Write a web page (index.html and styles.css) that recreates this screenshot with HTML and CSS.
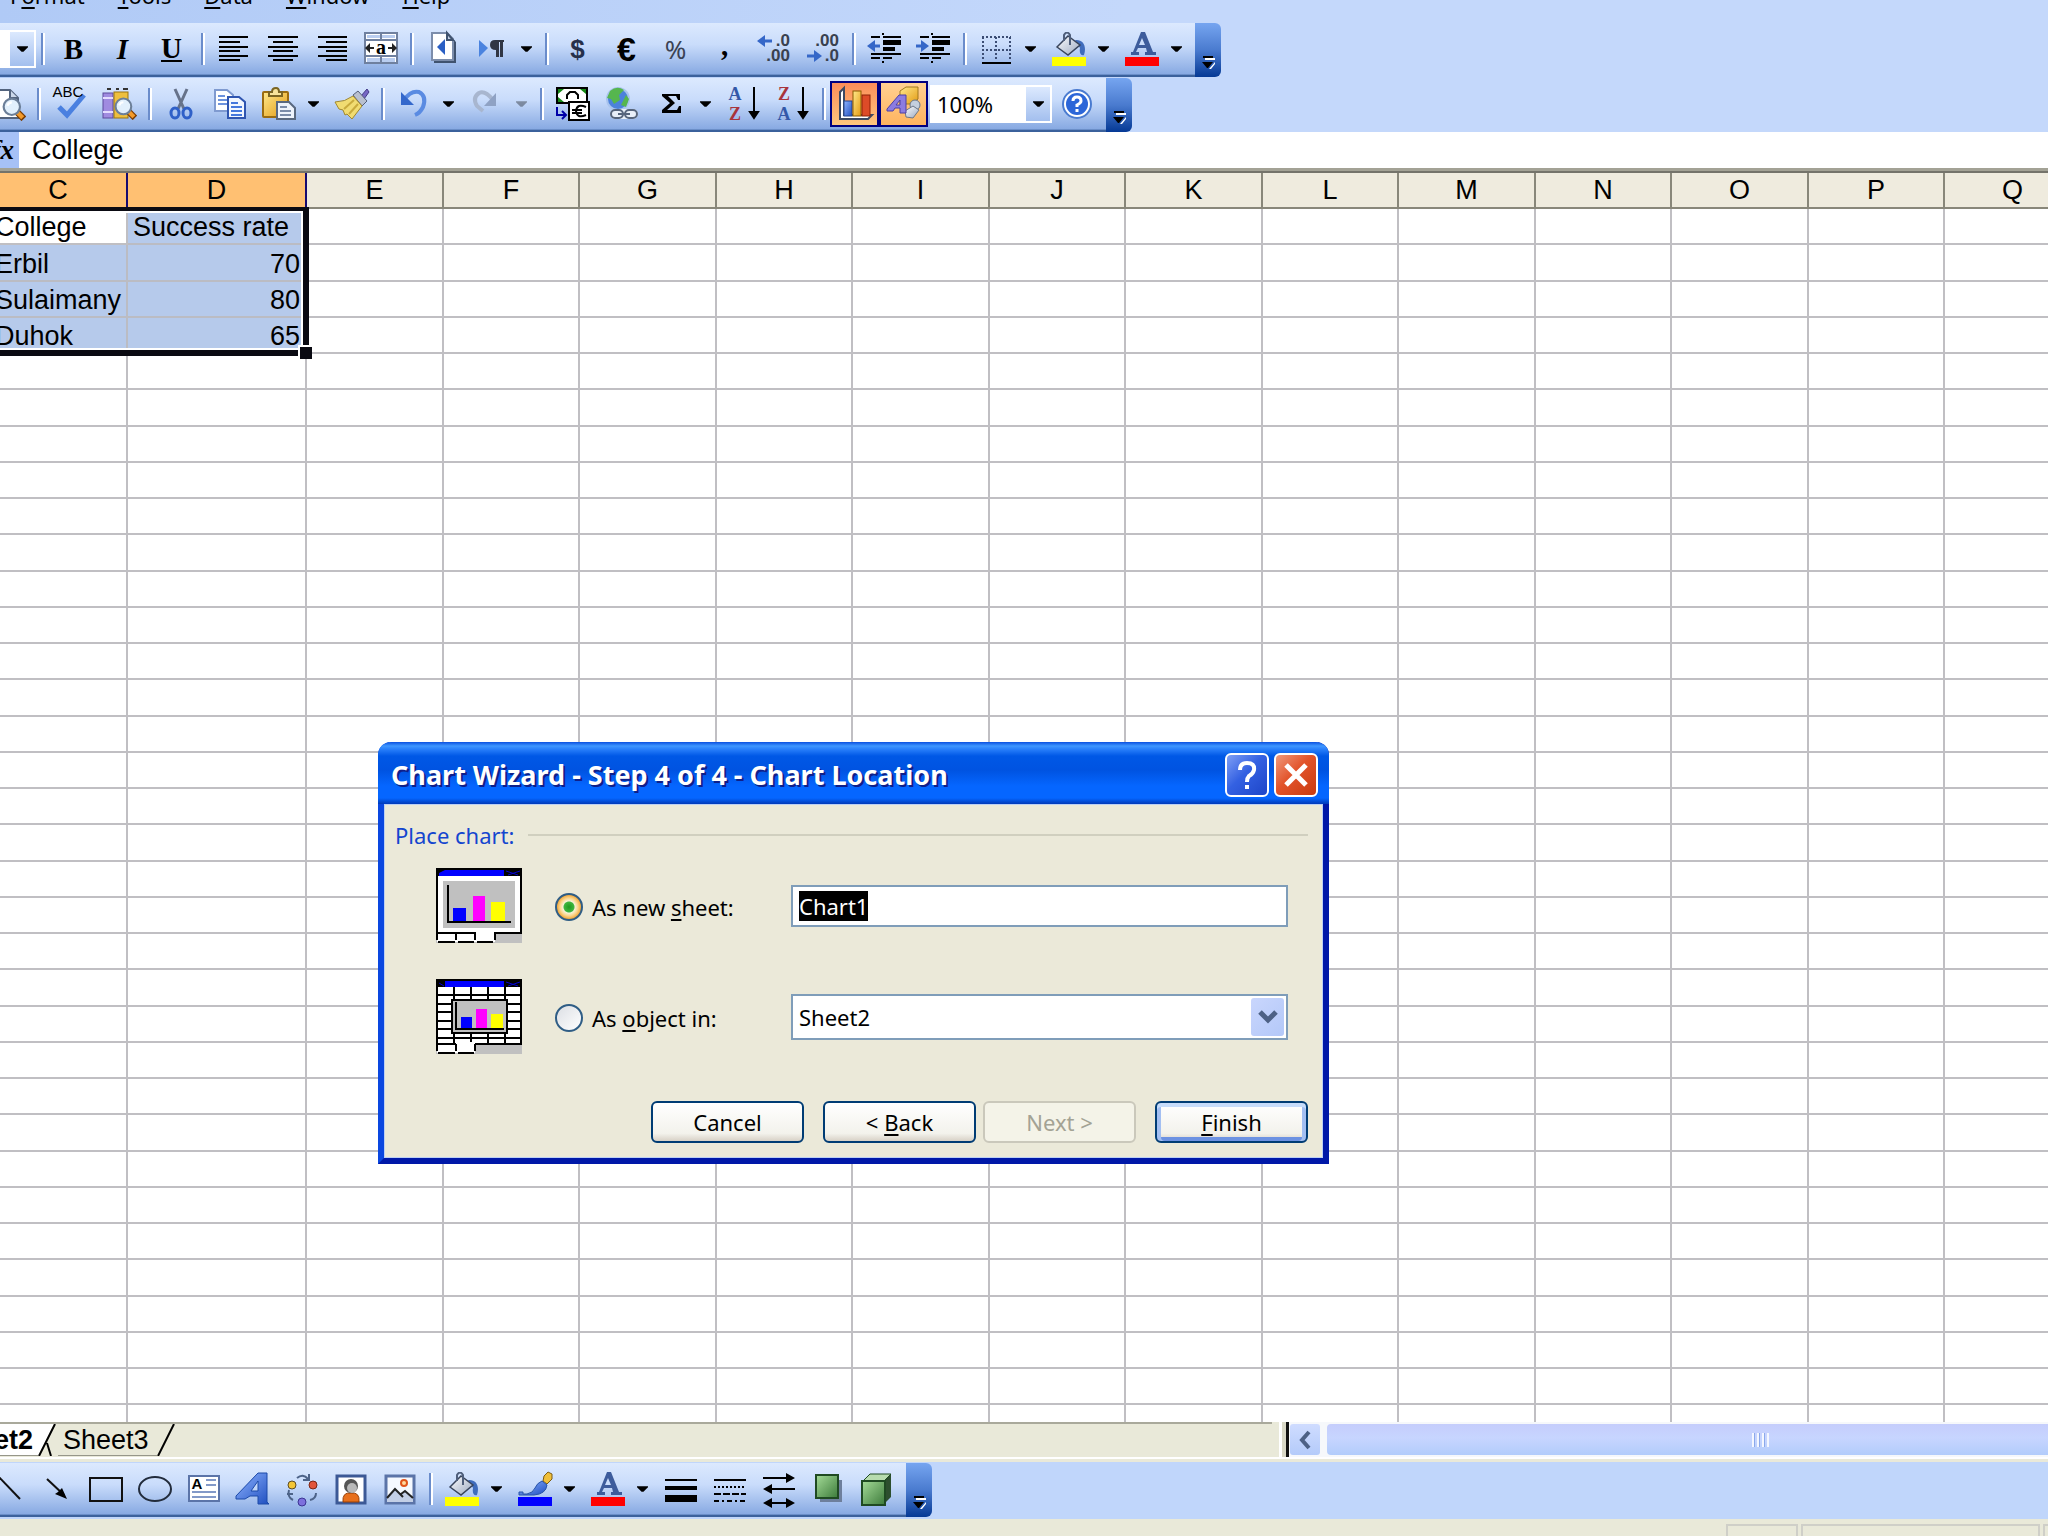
FILE: index.html
```html
<!DOCTYPE html>
<html lang="en">
<head>
    <meta charset="UTF-8">
    <meta name="viewport" content="width=device-width, initial-scale=1.0">
    <title>Sheet2</title>
    <link rel="stylesheet" href="styles.css">
</head>
<body>
    <!-- Shared icon shapes -->
    <svg class="defs" aria-hidden="true">
        <defs>
            <linearGradient id="gBlue" x1="0" y1="0" x2="1" y2="1">
                <stop offset="0" stop-color="#8fb4ff"/><stop offset="1" stop-color="#1f4fc0"/>
            </linearGradient>
            <linearGradient id="gGold" x1="0" y1="0" x2="1" y2="1">
                <stop offset="0" stop-color="#ffe98c"/><stop offset="1" stop-color="#e39a12"/>
            </linearGradient>
            <linearGradient id="gGreen" x1="0" y1="0" x2="1" y2="1">
                <stop offset="0" stop-color="#a5dc98"/><stop offset="1" stop-color="#3c7a3a"/>
            </linearGradient>
            <linearGradient id="gSilver" x1="0" y1="0" x2="1" y2="1">
                <stop offset="0" stop-color="#ffffff"/><stop offset="1" stop-color="#9aa8c0"/>
            </linearGradient>
        </defs>
        <symbol id="drop" viewBox="0 0 12 7"><path d="M0 0H12V1L7 6H5L0 1Z"/></symbol>
        <symbol id="more" viewBox="0 0 16 16">
            <path d="M5 3H15V5H5ZM11 14L15 9V7L9 14Z" fill="#fff"/>
            <path d="M3 1H13V3H3ZM2 7H13L8 13H7Z"/>
        </symbol>
        <symbol id="bucket" viewBox="0 0 34 24">
            <path d="M23 8C31 7 35 14 32 23C29 24 27 21 28 16Z" fill="#3f6cbc"/>
            <path d="M5 15L16 4L28 13L16 23Z" fill="url(#gSilver)" stroke="#39455c" stroke-width="1.5"/>
            <path d="M12 9V3Q15 -2 18 3V13" fill="none" stroke="#4f5f7b" stroke-width="2"/>
        </symbol>
        <symbol id="fontA" viewBox="0 0 34 24">
            <path d="M16 0H20L28 20H31V23H20V20H22L21 16H13L11 20H14V23H6V20H8ZM17 6L14 13H20Z" fill="#3d5c9c" fill-rule="evenodd"/>
        </symbol>
        <symbol id="lens" viewBox="0 0 22 22">
            <path d="M13 13L20 20" stroke="#7a3b00" stroke-width="6"/>
            <path d="M13 13L19 19" stroke="#f39a2a" stroke-width="4"/>
            <circle cx="9" cy="9" r="7.500" fill="#e2f0fc" stroke="#6c7f98" stroke-width="2"/>
            <path d="M5 8Q6 5 9 5" fill="none" stroke="#fff" stroke-width="2"/>
        </symbol>
    </svg>

    <nav class="menu">
        <a href="#">F<u>o</u>rmat</a>
        <a href="#"><u>T</u>ools</a>
        <a href="#"><u>D</u>ata</a>
        <a href="#"><u>W</u>indow</a>
        <a href="#"><u>H</u>elp</a>
    </nav>

    <div class="toolbars">
        <!-- Formatting -->
        <div class="toolbar">
            <div class="tools">
                <div class="combo combo-size">
                    <select aria-label="Font size"><option></option></select>
                    <span class="combo-arrow"><svg class="drop-icon"><use href="#drop"/></svg></span>
                </div>
                <span class="sep"></span>
                <button class="tool serif"><b>B</b></button>
                <button class="tool serif"><b><i>I</i></b></button>
                <button class="tool serif"><b class="lined">U</b></button>
                <span class="sep"></span>
                <button class="tool" aria-label="Align left"><svg class="icon" viewBox="0 0 34 34"><path d="M2 5H31M2 10H23M2 15H31M2 19H23M2 24H31M2 28H23" stroke="#000" stroke-width="2"/></svg></button>
                <button class="tool" aria-label="Center"><svg class="icon" viewBox="0 0 34 34"><path d="M2 5H32M7 10H27M2 15H32M7 19H27M2 24H32M7 28H27" stroke="#000" stroke-width="2"/></svg></button>
                <button class="tool" aria-label="Align right"><svg class="icon" viewBox="0 0 34 34"><path d="M3 5H32M11 10H32M3 15H32M11 19H32M3 24H32M11 28H32" stroke="#000" stroke-width="2"/></svg></button>
                <button class="tool" aria-label="Merge and center"><svg class="icon" viewBox="0 0 34 34">
                    <rect x="1" y="1" width="32" height="30" fill="#fff" stroke="#6f809f" stroke-width="2"/>
                    <path d="M3 3H16V6H3ZM18 3H31V6H18ZM3 26H16V30H3ZM18 26H31V30H18Z" fill="#b9cdf0"/>
                    <path d="M1 8H33M1 24H33M17 1V8M17 24V31" stroke="#6f809f" stroke-width="2"/>
                    <path d="M2 16H10M32 16H24" stroke="#222" stroke-width="2"/>
                    <path d="M6 11V21L1 16ZM28 11V21L33 16Z" fill="#222"/>
                    <text x="17" y="22" class="icon-a">a</text>
                </svg></button>
                <span class="sep"></span>
                <button class="tool" aria-label="Sheet right-to-left"><svg class="icon" viewBox="0 0 34 34">
                    <path d="M8 4H24L30 10V31H8Z" fill="#40536f"/>
                    <path d="M6 1H21L27 7V28H6Z" fill="#fff" stroke="#7c8dab" stroke-width="2"/>
                    <path d="M21 1V8H27Z" fill="#c3d0e6" stroke="#40536f" stroke-width="2"/>
                    <path d="M19 7V23L11 15Z" fill="#2a5fc4"/>
                </svg></button>
                <button class="tool" aria-label="Left-to-right"><svg class="icon" viewBox="0 0 34 34">
                    <path d="M4 8L13 16L4 25Z" fill="#4a83df"/>
                    <path d="M20 8H29V10H28V25H25V10H24V25H21V18Q15 18 15 13Q15 8 20 8Z" fill="#303644"/>
                </svg></button>
                <button class="drop" aria-label="Direction options"><svg class="drop-icon"><use href="#drop"/></svg></button>
                <span class="sep"></span>
                <button class="tool money">$</button>
                <button class="tool euro">€</button>
                <button class="tool percent">%</button>
                <button class="tool serif comma"><b>,</b></button>
                <button class="tool" aria-label="Increase decimal"><svg class="icon" viewBox="0 0 34 34">
                    <path d="M4 9H15" stroke="#3567c8" stroke-width="3"/><path d="M0 9L8 3V15Z" fill="#3567c8"/>
                    <text x="33" y="14" class="icon-num">.0</text><text x="33" y="29" class="icon-num">.00</text>
                </svg></button>
                <button class="tool" aria-label="Decrease decimal"><svg class="icon" viewBox="0 0 34 34">
                    <path d="M1 24H12" stroke="#3567c8" stroke-width="3"/><path d="M16 24L8 18V30Z" fill="#3567c8"/>
                    <text x="33" y="14" class="icon-num">.00</text><text x="33" y="29" class="icon-num">.0</text>
                </svg></button>
                <span class="sep"></span>
                <button class="tool" aria-label="Decrease indent"><svg class="icon" viewBox="0 0 34 34">
                    <path d="M3 5H12M15 5H33M3 22H33M3 26H12M15 26H24M15 1V3M15 29V31" stroke="#000" stroke-width="2"/>
                    <path d="M15 8H33V13H15ZM15 15H27V19H15Z"/>
                    <path d="M4 14H12" stroke="#3567c8" stroke-width="3"/><path d="M-1 14L7 8V20Z" fill="#3567c8"/>
                </svg></button>
                <button class="tool" aria-label="Increase indent"><svg class="icon" viewBox="0 0 34 34">
                    <path d="M3 5H12M15 5H33M3 22H33M3 26H12M15 26H24M15 1V3M15 29V31" stroke="#000" stroke-width="2"/>
                    <path d="M15 8H33V13H15ZM15 15H27V19H15Z"/>
                    <path d="M-1 14H7" stroke="#3567c8" stroke-width="3"/><path d="M12 14L4 8V20Z" fill="#3567c8"/>
                </svg></button>
                <span class="sep"></span>
                <button class="tool" aria-label="Borders"><svg class="icon" viewBox="0 0 34 34">
                    <path d="M3 5H32M3 18H32M4 5V28M17 5V28M31 5V28" stroke="#3b4d74" stroke-width="2" stroke-dasharray="2 2"/>
                    <path d="M3 31H32" stroke="#000" stroke-width="2"/>
                </svg></button>
                <button class="drop" aria-label="Border styles"><svg class="drop-icon"><use href="#drop"/></svg></button>
                <button class="tool" aria-label="Fill color"><svg class="icon" viewBox="0 0 34 34"><use href="#bucket" width="34" height="24"/><path d="M0 25H34V34H0Z" fill="#ff0"/></svg></button>
                <button class="drop" aria-label="Fill colors"><svg class="drop-icon"><use href="#drop"/></svg></button>
                <button class="tool" aria-label="Font color"><svg class="icon" viewBox="0 0 34 34"><use href="#fontA" width="34" height="24"/><path d="M0 25H34V34H0Z" fill="#f00"/></svg></button>
                <button class="drop" aria-label="Font colors"><svg class="drop-icon"><use href="#drop"/></svg></button>
            </div>
            <button class="cap" aria-label="Toolbar options"><svg class="more-icon"><use href="#more"/></svg></button>
        </div>

        <!-- Standard -->
        <div class="toolbar">
            <div class="tools cut">
                <button class="tool" aria-label="Print preview"><svg class="icon" viewBox="0 0 34 34">
                    <path d="M0 3H19L27 11V31H0Z" fill="#fff" stroke="#53637d" stroke-width="2"/>
                    <path d="M19 3V11H27" fill="#ccd8ea" stroke="#53637d" stroke-width="2"/>
                    <use href="#lens" x="11" y="10" width="24" height="24"/>
                </svg></button>
                <span class="sep"></span>
                <button class="tool" aria-label="Spelling"><svg class="icon" viewBox="0 0 34 34">
                    <path d="M6 20L14 28L31 8" fill="none" stroke="#4a80e0" stroke-width="5"/>
                    <text x="15" y="10" class="icon-abc">ABC</text>
                </svg></button>
                <button class="tool" aria-label="Research"><svg class="icon" viewBox="0 0 34 34">
                    <rect x="1" y="6" width="10" height="25" fill="#a08be0" stroke="#5c4a9c"/>
                    <rect x="12" y="5" width="14" height="26" fill="#eebf3e" stroke="#9a7410"/>
                    <path d="M1 11H11M1 25H11" stroke="#e4dcff" stroke-width="2"/>
                    <path d="M5 2H9M14 2H17M21 2H26" stroke="#333" stroke-width="2"/>
                    <use href="#lens" x="12" y="10" width="23" height="23"/>
                </svg></button>
                <span class="sep"></span>
                <button class="tool" aria-label="Cut"><svg class="icon" viewBox="0 0 34 34">
                    <path d="M11 2L20 22M23 2L14 22" stroke="#66728a" stroke-width="3"/>
                    <ellipse cx="11" cy="26" rx="4" ry="5" fill="none" stroke="#2f60c8" stroke-width="3"/>
                    <ellipse cx="23" cy="26" rx="4" ry="5" fill="none" stroke="#2f60c8" stroke-width="3"/>
                </svg></button>
                <button class="tool" aria-label="Copy"><svg class="icon" viewBox="0 0 34 34">
                    <path d="M2 3H14L20 8V24H2Z" fill="#fff" stroke="#7f9ad0" stroke-width="2"/>
                    <path d="M5 9H12M5 13H14M5 17H14" stroke="#6d93dd" stroke-width="2"/>
                    <path d="M15 10H26L32 15V31H15Z" fill="#f2f7ff" stroke="#2f55b0" stroke-width="2"/>
                    <path d="M18 16H25M18 20H29M18 24H29M18 28H29" stroke="#4477dd" stroke-width="2"/>
                </svg></button>
                <button class="tool" aria-label="Paste"><svg class="icon" viewBox="0 0 34 34">
                    <rect x="1" y="5" width="25" height="25" rx="1" fill="url(#gGold)" stroke="#9b6c10" stroke-width="2"/>
                    <path d="M7 9V5H10Q10 1 14 1Q17 1 17 5H20V9Z" fill="#f8e39a" stroke="#7b6523" stroke-width="2"/>
                    <path d="M15 15H27L33 21V32H15Z" fill="#eef3fb" stroke="#59687f" stroke-width="2"/>
                    <path d="M18 20H25M18 24H29M18 28H29" stroke="#7a8ba8" stroke-width="2"/>
                </svg></button>
                <button class="drop" aria-label="Paste options"><svg class="drop-icon"><use href="#drop"/></svg></button>
                <button class="tool" aria-label="Format painter"><svg class="icon" viewBox="0 0 34 34">
                    <path d="M26 9L32 2L34 5L29 12Z" fill="#7668c4" stroke="#443a86"/>
                    <path d="M18 8L23 4L32 14L27 19Z" fill="#b9c0cf" stroke="#56607a"/>
                    <path d="M18 9L27 19L17 32L12 27L10 28L8 23L4 22L0 15Q10 15 18 9Z" fill="#f1dc72" stroke="#a2882c"/>
                    <path d="M19 13L9 22M23 17L14 27" stroke="#c9ab3d" stroke-width="2"/>
                </svg></button>
                <span class="sep"></span>
                <button class="tool" aria-label="Undo"><svg class="icon" viewBox="0 0 34 34">
                    <path d="M7 13Q14 3 22 5Q30 9 26 20Q23 26 18 28" fill="none" stroke="#5a8be2" stroke-width="4"/>
                    <path d="M4 5V18H17Z" fill="#3468cc"/>
                </svg></button>
                <button class="drop" aria-label="Undo list"><svg class="drop-icon"><use href="#drop"/></svg></button>
                <button class="tool" aria-label="Redo" disabled><svg class="icon" viewBox="0 0 34 34">
                    <path d="M23 13Q15 3 9 6Q2 11 7 19L13 24" fill="none" stroke="#a8b6cf" stroke-width="4"/>
                    <path d="M26 6V19H14Z" fill="#8fa2c4"/>
                </svg></button>
                <button class="drop" aria-label="Redo list" disabled><svg class="drop-icon"><use href="#drop"/></svg></button>
                <span class="sep"></span>
                <button class="tool" aria-label="Euro conversion"><svg class="icon" viewBox="0 0 34 34">
                    <rect x="1" y="1" width="30" height="15" fill="#fff" stroke="#000" stroke-width="2"/>
                    <path d="M2 2H8L2 7ZM30 2H24L30 7ZM2 15V10L8 15Z" fill="#168a16"/>
                    <path d="M11 12V8L14 5H19L22 8V12" fill="none" stroke="#000" stroke-width="2"/>
                    <path d="M1 20V28H9M6 24L10 28L6 32" fill="none" stroke="#0000a8" stroke-width="2"/>
                    <rect x="13" y="15" width="20" height="18" fill="#fff" stroke="#000" stroke-width="2"/>
                    <path d="M30 20Q21 16 20 24Q21 32 30 28M16 23H26M16 26H26" fill="none" stroke="#000" stroke-width="2"/>
                </svg></button>
                <button class="tool" aria-label="Hyperlink"><svg class="icon" viewBox="0 0 34 34">
                    <circle cx="13" cy="12" r="11" fill="#4c82dc" stroke="#a9c4ee" stroke-width="2"/>
                    <path d="M5 4Q12 -2 19 3L14 8L15 13L9 17L6 12L2 11ZM21 8L24 12L21 20L16 18Z" fill="#56b64e"/>
                    <rect x="5" y="22" width="28" height="10" rx="5" fill="#e9eff8"/>
                    <rect x="6" y="23" width="12" height="8" rx="4" fill="none" stroke="#57657c" stroke-width="2"/>
                    <rect x="20" y="23" width="12" height="8" rx="4" fill="none" stroke="#57657c" stroke-width="2"/>
                    <path d="M13 27H25" stroke="#57657c" stroke-width="2"/>
                </svg></button>
                <button class="tool" aria-label="AutoSum"><svg class="icon" viewBox="0 0 34 34"><path d="M8 7H26V13H24L22 9H14L21 16L13 23H23L25 19H27V26H8V23L16 16L8 9Z"/></svg></button>
                <button class="drop" aria-label="AutoSum functions"><svg class="drop-icon"><use href="#drop"/></svg></button>
                <button class="tool" aria-label="Sort ascending"><svg class="icon" viewBox="0 0 34 34">
                    <text x="8" y="13" class="icon-sort blue">A</text><text x="8" y="33" class="icon-sort red">Z</text>
                    <path d="M27 0V30M23 25H31L27 31Z" stroke="#000" stroke-width="2"/>
                </svg></button>
                <button class="tool" aria-label="Sort descending"><svg class="icon" viewBox="0 0 34 34">
                    <text x="8" y="13" class="icon-sort red">Z</text><text x="8" y="33" class="icon-sort blue">A</text>
                    <path d="M27 0V30M23 25H31L27 31Z" stroke="#000" stroke-width="2"/>
                </svg></button>
                <span class="sep"></span>
                <button class="tool pressed" aria-label="Chart wizard"><svg class="icon" viewBox="0 0 34 34">
                    <path d="M2 32V5L6 1V28H34L30 32Z" fill="#fff" stroke="#3c4a63" stroke-width="2"/>
                    <rect x="6" y="14" width="8" height="15" fill="url(#gBlue)" stroke="#22458f"/>
                    <rect x="15" y="4" width="8" height="25" fill="url(#gGold)" stroke="#8a5b00"/>
                    <rect x="24" y="8" width="8" height="21" fill="#dd4b28" stroke="#8f2207"/>
                </svg></button>
                <button class="tool active" aria-label="Drawing"><svg class="icon" viewBox="0 0 34 34">
                    <path d="M13 4L19 0H31V12L25 17H13Z" fill="url(#gGold)" stroke="#a07920"/>
                    <circle cx="28" cy="18" r="5" fill="#c4cfdf" stroke="#6b7688"/>
                    <path d="M18 24L26 19L32 23L26 31L19 30Z" fill="url(#gSilver)" stroke="#6b7688"/>
                    <path d="M0 22L12 8H19V26H13V21H8L6 24H0ZM13 13L9 18H13Z" fill="#8c7ce0" stroke="#4d3fa4" fill-rule="evenodd"/>
                </svg></button>
                <div class="combo combo-zoom">
                    <select aria-label="Zoom"><option>100%</option></select>
                    <span class="combo-arrow"><svg class="drop-icon"><use href="#drop"/></svg></span>
                </div>
                <button class="tool" aria-label="Help"><svg class="icon" viewBox="0 0 34 34">
                    <circle cx="17" cy="17" r="14" fill="#fff" stroke="#4a7bd0" stroke-width="2"/>
                    <circle cx="17" cy="17" r="11" fill="#2c66d8"/>
                    <path d="M13 14Q13 10 17 10Q21 10 21 14Q21 16 17 18V20M17 22V25" fill="none" stroke="#fff" stroke-width="3"/>
                </svg></button>
            </div>
            <button class="cap" aria-label="Toolbar options"><svg class="more-icon"><use href="#more"/></svg></button>
        </div>
    </div>

    <div class="formula">
        <span class="fx"><i>fx</i></span>
        <input type="text" aria-label="Formula" value="College">
    </div>

    <main class="sheet">
        <table>
            <thead><tr id="letters"></tr></thead>
            <tbody id="cells"></tbody>
        </table>
        <div class="selection"></div>
    </main>

    <div class="tabstrip">
        <div class="tabs">
            <button class="tab current">Sheet2</button>
            <svg class="slash" viewBox="0 0 20 32"><path d="M0 32L16 0H0Z" fill="#fff"/><path d="M17 0L1 32M9 19L13 32" stroke="#000" stroke-width="2" fill="none"/></svg>
            <button class="tab">Sheet3</button>
            <svg class="slash" viewBox="0 0 20 32"><path d="M17 0L1 32" stroke="#000" stroke-width="2"/></svg>
        </div>
        <div class="scroll">
            <span class="splitter"></span>
            <button class="scroll-left" aria-label="Scroll left"><svg viewBox="0 0 12 20"><path d="M10 2L3 10L10 18" fill="none" stroke="#4d6185" stroke-width="4"/></svg></button>
            <div class="thumb"><span class="grip"></span></div>
        </div>
    </div>

    <!-- Drawing -->
    <div class="drawing">
        <div class="toolbar">
            <div class="tools cut">
                <button class="tool" aria-label="Line"><svg class="icon" viewBox="0 0 34 34"><path d="M6 3L29 27" stroke="#111" stroke-width="2"/></svg></button>
                <button class="tool" aria-label="Arrow"><svg class="icon" viewBox="0 0 34 34"><path d="M7 7L24 23" stroke="#111" stroke-width="2"/><path d="M27 27L15 22L18 20L22 16Z"/></svg></button>
                <button class="tool" aria-label="Rectangle"><svg class="icon" viewBox="0 0 34 34"><rect x="1" y="6" width="32" height="23" fill="none" stroke="#111" stroke-width="2"/></svg></button>
                <button class="tool" aria-label="Oval"><svg class="icon" viewBox="0 0 34 34"><ellipse cx="17" cy="17" rx="16" ry="12" fill="none" stroke="#222c3c" stroke-width="2"/></svg></button>
                <button class="tool" aria-label="Text box"><svg class="icon" viewBox="0 0 34 34">
                    <rect x="2" y="4" width="30" height="25" fill="#fff" stroke="#5b74a8" stroke-width="2"/>
                    <path d="M19 8H29M19 13H29M5 20H29M5 25H29" stroke="#8299c8" stroke-width="2"/>
                    <text x="10" y="17" class="icon-box">A</text>
                </svg></button>
                <button class="tool" aria-label="WordArt"><svg class="icon" viewBox="0 0 34 34"><path d="M0 24L22 1H31V30L33 32H22V24H14L9 27H0ZM22 9L15 19H22Z" fill="url(#gBlue)" stroke="#1d4aa8" fill-rule="evenodd"/></svg></button>
                <button class="tool" aria-label="Diagram"><svg class="icon" viewBox="0 0 34 34">
                    <path d="M12 6Q18 1 23 7M24 2V8H18M31 21Q31 27 25 28M4 18Q2 25 8 28M2 22H8" fill="none" stroke="#4d6388" stroke-width="2"/>
                    <circle cx="7" cy="13" r="4" fill="#f3c534" stroke="#5c4a22"/><circle cx="28" cy="13" r="4" fill="#e2553a" stroke="#7c2614"/><circle cx="17" cy="30" r="4" fill="#7d70dd" stroke="#3c3494"/>
                </svg></button>
                <button class="tool" aria-label="Clip art"><svg class="icon" viewBox="0 0 34 34">
                    <rect x="3" y="4" width="28" height="27" fill="#fff" stroke="#3c5996" stroke-width="3"/>
                    <path d="M9 30Q8 20 17 21Q26 20 25 30Z" fill="#e8701c" stroke="#9a3f05"/>
                    <circle cx="17" cy="14" r="7" fill="#555"/><circle cx="18" cy="16" r="5" fill="#b9b9b9"/>
                </svg></button>
                <button class="tool" aria-label="Picture"><svg class="icon" viewBox="0 0 34 34">
                    <rect x="3" y="4" width="28" height="27" fill="#f5f9ff" stroke="#5b74a8" stroke-width="3"/>
                    <path d="M4 26L12 17L18 23L22 19L30 26V30H4Z" fill="#c3cfe6"/>
                    <path d="M4 26L12 17L20 25M18 22L22 19L30 26" fill="none" stroke="#222" stroke-width="2"/>
                    <circle cx="21" cy="11" r="3" fill="#ffd9a0" stroke="#e0551c" stroke-width="2"/>
                </svg></button>
                <span class="sep"></span>
                <button class="tool" aria-label="Shape fill"><svg class="icon" viewBox="0 0 34 34"><use href="#bucket" width="34" height="24"/><path d="M0 25H34V34H0Z" fill="#ff0"/></svg></button>
                <button class="drop" aria-label="Shape fills"><svg class="drop-icon"><use href="#drop"/></svg></button>
                <button class="tool" aria-label="Line color"><svg class="icon" viewBox="0 0 34 34">
                    <path d="M26 4L30 0L34 2V7L29 12L25 9Z" fill="#f0bf3a" stroke="#7c5c12"/>
                    <path d="M1 20V23H16Q28 22 29 13L24 9Q19 11 17 16Q15 21 9 22H5V20Z" fill="url(#gBlue)" stroke="#2854a8"/>
                    <path d="M0 25H34V34H0Z" fill="#00f"/>
                </svg></button>
                <button class="drop" aria-label="Line colors"><svg class="drop-icon"><use href="#drop"/></svg></button>
                <button class="tool" aria-label="Text color"><svg class="icon" viewBox="0 0 34 34"><use href="#fontA" width="34" height="24"/><path d="M0 25H34V34H0Z" fill="#f00"/></svg></button>
                <button class="drop" aria-label="Text colors"><svg class="drop-icon"><use href="#drop"/></svg></button>
                <button class="tool" aria-label="Line style"><svg class="icon" viewBox="0 0 34 34"><path d="M1 7H33V9H1ZM1 14H33V18H1ZM1 23H33V30H1Z"/></svg></button>
                <button class="tool" aria-label="Dash style"><svg class="icon" viewBox="0 0 34 34">
                    <path d="M1 8H33" stroke="#000" stroke-width="2"/><path d="M1 15H33" stroke="#000" stroke-width="2" stroke-dasharray="2 2"/>
                    <path d="M1 22H33" stroke="#000" stroke-width="2" stroke-dasharray="7 2"/><path d="M1 29H33" stroke="#000" stroke-width="2" stroke-dasharray="5 3 2 3"/>
                </svg></button>
                <button class="tool" aria-label="Arrow style"><svg class="icon" viewBox="0 0 34 34">
                    <path d="M1 6H28M6 17H33M6 31H28" stroke="#000" stroke-width="2"/>
                    <path d="M24 1V11L33 6ZM10 12V22L1 17ZM24 26V36L33 31ZM10 26V36L1 31Z"/>
                </svg></button>
                <button class="tool" aria-label="Shadow style"><svg class="icon" viewBox="0 0 34 34"><rect x="9" y="8" width="22" height="22" fill="#6e7f9c"/><rect x="5" y="3" width="22" height="23" fill="url(#gGreen)" stroke="#1f4a22" stroke-width="2"/></svg></button>
                <button class="tool" aria-label="3-D style"><svg class="icon" viewBox="0 0 34 34">
                    <path d="M3 9L10 2H31V25L24 32Z" fill="#2d4f2e"/><path d="M3 9L10 2H31L24 9Z" fill="#b7dcae" stroke="#1f4a22"/>
                    <rect x="2" y="9" width="23" height="24" fill="url(#gGreen)" stroke="#1f4a22" stroke-width="2"/>
                </svg></button>
            </div>
            <button class="cap" aria-label="Toolbar options"><svg class="more-icon"><use href="#more"/></svg></button>
        </div>
    </div>

    <footer class="status">
        <span class="panel panel-small"></span>
        <span class="panel panel-wide"></span>
        <span class="panel panel-end"></span>
    </footer>

    <!-- Chart wizard window -->
    <form class="dialog" role="dialog" aria-labelledby="dialog-title">
        <header class="titlebar">
            <h1 id="dialog-title">Chart Wizard - Step 4 of 4 - Chart Location</h1>
            <button type="button" class="caption help" aria-label="Help"><svg viewBox="0 0 40 40"><path d="M13 15Q13 8 20 8Q28 8 27 15Q26 19 22 21Q20 23 20 27M20 30V34" fill="none" stroke="#fff" stroke-width="4"/></svg></button>
            <button type="button" class="caption close" aria-label="Close"><svg viewBox="0 0 40 40"><path d="M10 10L30 30M30 10L10 30" stroke="#fff" stroke-width="5"/></svg></button>
        </header>
        <div class="dialog-body">
            <div class="group-title">Place chart:</div>
            <div class="choices">
                <svg class="preview" viewBox="0 0 86 75">
                    <path d="M0 0H86V75H0Z" fill="#c0c0c0"/><path d="M1 1H85V65H59V74H1Z" fill="#fff"/>
                    <path d="M0 0H86V8H0Z"/><path d="M9 2H68V8H3V5Z" fill="#00f"/><path d="M70 3L82 7M72 7L84 3" stroke="#00c"/>
                    <path d="M7 13H79V60H7Z" fill="#c0c0c0"/>
                    <path d="M17 40H30V54H17Z" fill="#00f"/><path d="M37 28H49V54H37Z" fill="#f0f"/><path d="M55 34H69V54H55Z" fill="#ff0"/>
                    <path d="M12 17V54H75M1 0V72M85 0V65H59V72M0 65H39V72M20 65V72M2 74H19M22 74H38M41 74H57" fill="none" stroke="#000" stroke-width="2"/>
                </svg>
                <label class="choice"><input type="radio" name="place" checked>As new <u>s</u>heet:</label>
                <input type="text" id="sheet-name" class="field" aria-label="New sheet name" value="Chart1">

                <svg class="preview" viewBox="0 0 86 75">
                    <path d="M0 0H86V75H0Z" fill="#c0c0c0"/><path d="M1 1H85V65H39V74H1Z" fill="#fff"/>
                    <path d="M0 0H86V8H0Z"/><path d="M9 2H68V8H9Z" fill="#00f"/><path d="M3 4L8 7M70 3L82 7M72 7L84 3" stroke="#00c"/>
                    <path d="M0 16H85M0 25H85M0 33H85M0 42H85M0 50H85M0 59H85M0 65H20M39 65H85M1 0V72M18 8V65M35 8V59M35 59V63M52 8V65M69 8V65M85 0V66M39 65V72M20 65V72M2 74H19M22 74H38" fill="none" stroke="#000" stroke-width="2"/>
                    <path d="M16 21H71V54H16Z" fill="#c0c0c0" stroke="#000" stroke-width="2"/>
                    <path d="M25 38H36V49H25Z" fill="#00f"/><path d="M40 30H51V49H40Z" fill="#f0f"/><path d="M55 35H67V49H55Z" fill="#ff0"/>
                    <path d="M20 23V50H68" fill="none" stroke="#000" stroke-width="2"/>
                </svg>
                <label class="choice"><input type="radio" name="place">As <u>o</u>bject in:</label>
                <div class="field-select">
                    <select class="field" aria-label="Target sheet"><option>Sheet2</option></select>
                    <span class="field-arrow"><svg viewBox="0 0 20 14"><path d="M2 2L10 10L18 2" fill="none" stroke="#4d6185" stroke-width="5"/></svg></span>
                </div>
            </div>
            <div class="actions">
                <button type="button" class="push">Cancel</button>
                <button type="button" class="push">&lt; <u>B</u>ack</button>
                <button type="button" class="push next" disabled>Next &gt;</button>
                <button type="button" class="push default"><u>F</u>inish</button>
            </div>
        </div>
    </form>

    <script>
        const letters = 'CDEFGHIJKLMNOPQ'.split('');
        const data = [
            ['College', 'Success rate'],
            ['Erbil', 70],
            ['Sulaimany', 80],
            ['Duhok', 65]
        ];

        document.getElementById('letters').innerHTML = letters
            .map((letter, i) => `<th${i < 2 ? ' class="picked"' : ''}>${letter}</th>`)
            .join('');

        const body = document.getElementById('cells');
        for (let r = 0; r < 34; r++) {
            const row = document.createElement('tr');
            letters.forEach((letter, c) => {
                const cell = document.createElement('td');
                const value = data[r] && data[r][c];
                if (value !== undefined) {
                    cell.textContent = value;
                    if (r + c > 0) cell.classList.add('picked');
                    if (typeof value === 'number') cell.classList.add('number');
                }
                row.appendChild(cell);
            });
            body.appendChild(row);
        }

        // The wizard opens with the sheet name selected
        const sheetName = document.getElementById('sheet-name');
        sheetName.focus();
        sheetName.select();
    </script>
</body>
</html>
```
FILE: styles.css
```css
* {
    box-sizing: border-box;
}
body {
    margin: 0;
    height: 100vh;
    display: flex;
    flex-direction: column;
    overflow: hidden;
    background: #fff;
    color: #000;
    font-family: "Noto Sans", sans-serif;
    font-size: 22px;
}
button, input, select {
    font: inherit;
    color: inherit;
    margin: 0;
    padding: 0;
    border: 0;
    border-radius: 0;
    background: none;
    outline: none;
}
select {
    appearance: none;
}
u {
    text-decoration-thickness: 2px;
    text-underline-offset: 3px;
}
.defs {
    position: absolute;
    width: 0;
    height: 0;
}

/* Menu, scrolled up so only the foot of the words shows */
.menu {
    flex: none;
    height: 23px;
    padding-left: 10px;
    display: flex;
    align-items: flex-end;
    gap: 33px;
    background: linear-gradient(90deg, #b0caf6, #c4d8fb 55%);
    overflow: hidden;
}
.menu a {
    color: #000;
    text-decoration: none;
    line-height: 30px;
    margin-bottom: 13px;
}

/* Toolbars */
.toolbars {
    flex: none;
    display: flex;
    flex-direction: column;
    align-items: flex-start;
    gap: 1px;
    background: linear-gradient(90deg, #b0caf6, #c4d8fb 55%);
}
.toolbar {
    display: flex;
    height: 54px;
}
.tools {
    display: flex;
    align-items: center;
    padding: 0 5px 2px 0;
    background: linear-gradient(#dce9fe, #c9dcfb 40%, #87a9e2 95%, #3b619c 96%);
}
.tools.cut {
    margin-left: -17px;
}
.tool {
    flex: none;
    width: 49px;
    height: 46px;
    display: flex;
    align-items: center;
    justify-content: center;
}
.icon {
    width: 34px;
    height: 34px;
    overflow: visible;
}
.drop {
    flex: none;
    width: 24px;
    height: 46px;
    padding-right: 4px;
    display: flex;
    align-items: center;
    justify-content: center;
}
.drop:disabled {
    opacity: 0.35;
}
.drop-icon {
    width: 11px;
    height: 7px;
}
.sep {
    flex: none;
    width: 13px;
    height: 32px;
    background: linear-gradient(90deg, transparent 5px, #6a8ccb 5px, #6a8ccb 7px, #fff 7px, #fff 9px, transparent 9px);
}
.serif {
    font-family: "Liberation Serif", serif;
    font-size: 29px;
}
.comma {
    padding-bottom: 8px;
}
.lined {
    border-bottom: 2px solid #000;
    line-height: 24px;
}
.money {
    font-family: "Liberation Sans", sans-serif;
    font-size: 26px;
    font-weight: bold;
    color: #26304a;
}
.euro {
    font-family: "Liberation Sans", sans-serif;
    font-size: 34px;
    font-weight: bold;
}
.percent {
    font-size: 26px;
    color: #3a4254;
}
.icon text {
    text-anchor: middle;
}
.icon .icon-a {
    font: bold 20px "Liberation Serif", serif;
}
.icon .icon-num {
    font: bold 17px "Liberation Sans", sans-serif;
    text-anchor: end;
    fill: #39414f;
}
.icon .icon-abc {
    font: 15px "Liberation Sans", sans-serif;
}
.icon .icon-sort {
    font: bold 18px "Liberation Serif", serif;
}
.icon .icon-box {
    font: bold 15px "Liberation Sans", sans-serif;
}
.blue {
    fill: #3458a8;
}
.red {
    fill: #a8343c;
}
.pressed, .active {
    border: 2px solid #000080;
}
.pressed {
    background: linear-gradient(#fb8d59, #ffc77e);
}
.active {
    background: linear-gradient(#ffd091, #ffb45f);
}
.cap {
    width: 26px;
    display: flex;
    align-items: flex-end;
    justify-content: center;
    padding-bottom: 6px;
    border-radius: 0 6px 6px 0;
    background: linear-gradient(#76a5f0, #4a7bcf 50%, #053995);
}
.more-icon {
    width: 16px;
    height: 16px;
}
.combo {
    position: relative;
    background: #fff;
    height: 38px;
}
.combo select {
    width: 100%;
    height: 100%;
    padding-left: 7px;
}
.combo-size {
    width: 36px;
}
.combo-zoom {
    width: 122px;
    margin-left: 2px;
}
.combo-arrow {
    position: absolute;
    top: 2px;
    right: 2px;
    bottom: 2px;
    width: 24px;
    display: flex;
    align-items: center;
    justify-content: center;
    background: linear-gradient(#dce9fe, #a3bfee);
    pointer-events: none;
}

/* Formula bar */
.formula {
    flex: none;
    height: 39px;
    display: flex;
    border-bottom: 3px solid #a3a295;
    font-family: "Liberation Sans", sans-serif;
    font-size: 27px;
}
.fx {
    width: 19px;
    background: #a6c1f6;
    display: flex;
    align-items: center;
    justify-content: flex-end;
    padding-right: 5px;
    font-family: "Liberation Serif", serif;
    font-weight: bold;
}
.formula input {
    flex: 1;
    padding-left: 13px;
}

/* Grid */
.sheet {
    flex: 1;
    min-height: 0;
    position: relative;
    overflow: hidden;
    border-top: 2px solid #74736a;
    font-family: "Liberation Sans", sans-serif;
    font-size: 27px;
    line-height: 32px;
}
.sheet table {
    width: 2092px;
    margin-left: -10px;
    table-layout: fixed;
    border-collapse: separate;
    border-spacing: 0;
}
.sheet th {
    width: 136px;
    height: 36px;
    padding: 0;
    font-weight: normal;
    background: #efebde;
    border-right: 2px solid #89877a;
    border-bottom: 2px solid #89877a;
}
.sheet th:nth-child(odd) {
    width: 137px;
}
.sheet th:nth-child(1) {
    width: 138px;
}
.sheet th:nth-child(2) {
    width: 179px;
}
.sheet th.picked {
    background: #ffc072;
    border-color: #170a70;
}
.sheet td {
    height: 36px;
    padding: 0 5px;
    vertical-align: bottom;
    white-space: nowrap;
    border-right: 2px solid #c0bfc3;
    border-bottom: 2px solid #c0bfc3;
}
.sheet tr:nth-child(4n + 2) td {
    height: 37px;
}
.sheet td.picked {
    background: #b6caeb;
    border-color: #bbbcc3;
}
.sheet td.number {
    text-align: right;
}
.selection {
    position: absolute;
    top: 34px;
    left: -20px;
    width: 329px;
    height: 149px;
    border: 6px solid #0a0a12;
    border-top-width: 4px;
    box-shadow: inset 0 0 0 2px #fff;
}
.selection::after {
    content: "";
    position: absolute;
    right: -9px;
    bottom: -9px;
    width: 12px;
    height: 12px;
    background: #0a0a12;
    border: solid #fff;
    border-width: 2px 0 0 2px;
}

/* Sheet tabs and horizontal scroll bar */
.tabstrip {
    flex: none;
    height: 40px;
    display: flex;
    background: #e9e9d9;
    border-bottom: 3px solid #e9e9d9;
    box-shadow: inset 0 -2px #fff;
}
.tabs {
    flex: 1272;
    display: flex;
    align-items: flex-start;
    height: 34px;
    border-top: 2px solid #a9a99b;
    font-family: "Liberation Sans", sans-serif;
    font-size: 27px;
}
.tab {
    height: 32px;
    line-height: 32px;
    padding: 0 8px 0 5px;
    border-bottom: 1px solid #96968a;
}
.tab.current {
    width: 38px;
    padding-right: 5px;
    display: flex;
    justify-content: flex-end;
    font-weight: bold;
    background: #fff;
}
.slash {
    width: 20px;
    height: 32px;
}
.scroll {
    flex: 776;
    display: flex;
    height: 35px;
    padding: 2px 0;
    background: #f6f8fb;
}
.splitter {
    width: 17px;
    margin: -2px 1px -2px 0;
    border-right: 3px solid #111;
    background: linear-gradient(90deg, #e9e9d9 7px, #fff 7px, #fff 10px, #d9d8c6 10px);
}
.scroll-left {
    width: 30px;
    display: flex;
    align-items: center;
    justify-content: center;
    border-radius: 3px;
    background: linear-gradient(#cfdcff, #b4cbfa);
}
.scroll-left svg {
    width: 12px;
    height: 20px;
}
.thumb {
    flex: 1;
    margin-left: 7px;
    padding-left: 425px;
    display: flex;
    align-items: center;
    border-radius: 4px 0 0 4px;
    background: linear-gradient(#c5cdfc, #c7d5ff 45%, #b2ccfb);
}
.grip {
    width: 17px;
    height: 14px;
    background: repeating-linear-gradient(90deg, #f4f7ff 0, #f4f7ff 2px, #8ca9ea 2px, #8ca9ea 3px, transparent 3px, transparent 5px);
}

.drawing {
    flex: none;
    display: flex;
    height: 57px;
    padding: 1px 0 2px;
    background: #c0d6fb;
}

.status {
    flex: none;
    height: 17px;
    display: flex;
    justify-content: flex-end;
    gap: 3px;
    padding-top: 5px;
    background: #e9e9d9;
}
.panel {
    border: 2px solid #cfcfc8;
    border-bottom: 0;
}
.panel-small {
    width: 72px;
}
.panel-wide {
    width: 239px;
}
.panel-end {
    width: 5px;
    border-right: 0;
}

/* Wizard window, floats over the grid */
.dialog {
    position: absolute;
    left: 378px;
    top: 742px;
    width: 951px;
    border: solid #0831d9;
    border-color: #0a4fe8 #0018a8 #0018a8 #0a47e0;
    border-width: 0 6px 6px;
    border-radius: 13px 13px 0 0;
    background: #ebe9d9;
}
.titlebar {
    height: 62px;
    margin: 0 -6px;
    padding: 4px 11px 0 13px;
    display: flex;
    align-items: center;
    gap: 5px;
    border-radius: 13px 13px 0 0;
    background: linear-gradient(#0a50e0 0, #3f97ff 4px, #2a80fb 7px, #0058e6 14px, #0053e1 28px, #0566ff 44px, #0566ff 56px, #0039b8 62px);
}
.titlebar h1 {
    flex: 1;
    margin: 0;
    font-size: 27px;
    line-height: 36px;
    color: #fff;
    text-shadow: 2px 2px #0f1f8a;
    white-space: nowrap;
}
.caption {
    width: 44px;
    height: 44px;
    padding: 0;
    border: 2px solid #fff;
    border-radius: 6px;
}
.caption svg {
    display: block;
    width: 40px;
    height: 40px;
}
.caption.help {
    background: linear-gradient(135deg, #7f9ff5, #3461e2 45%, #1d45c8);
}
.caption.close {
    background: linear-gradient(135deg, #f0997c, #e2532a 45%, #c93a10);
}
.dialog-body {
    padding: 16px 15px 15px 11px;
    box-shadow: inset 0 0 0 1px #bcd0f4;
}
.group-title {
    display: flex;
    align-items: center;
    gap: 14px;
    line-height: 30px;
    color: #1445cf;
}
.group-title::after {
    content: "";
    flex: 1;
    height: 2px;
    background: #d0cfbf;
}
.choices {
    display: grid;
    grid-template-columns: 86px 269px 1fr;
    gap: 36px 0;
    align-items: center;
    padding: 18px 20px 0 41px;
}
.preview {
    width: 86px;
    height: 75px;
}
.choice {
    display: flex;
    align-items: center;
    margin-left: 33px;
    padding-top: 3px;
    white-space: pre;
}
.choice input {
    appearance: none;
    width: 28px;
    height: 28px;
    margin-right: 9px;
    border: 2px solid #2f5d85;
    border-radius: 50%;
    background: linear-gradient(135deg, #dcdfe4, #fff);
}
.choice input:checked {
    background: radial-gradient(#1f9a1f 0, #3fb53f 5px, #f6f2d8 6px, #fbd48a 9px, #f0a83c 12px);
}
.field {
    width: 100%;
    height: 42px;
    padding: 0 6px;
    background: #fff;
    border: 2px solid #7f9db9;
}
.field::selection {
    background: #000;
    color: #fff;
}
.field-select {
    position: relative;
}
.field-select .field {
    display: block;
    height: 46px;
}
.field-arrow {
    position: absolute;
    top: 4px;
    right: 4px;
    bottom: 4px;
    width: 33px;
    display: flex;
    align-items: center;
    justify-content: center;
    border-radius: 3px;
    background: linear-gradient(135deg, #c9d6fd, #b3c8f8);
    pointer-events: none;
}
.field-arrow svg {
    width: 20px;
    height: 14px;
}
.actions {
    display: flex;
    justify-content: flex-end;
    gap: 19px;
    margin-top: 47px;
}
.push {
    width: 153px;
    height: 42px;
    border: 2px solid #003c74;
    border-radius: 6px;
    background: linear-gradient(#fff, #f3f2ec 80%, #d8d1c6);
}
.push.next {
    margin-left: -12px;
    color: #a3a294;
    background: #f4f3e8;
    border-color: #cac8bb;
}
.push.default {
    box-shadow: inset 0 4px #c6dcfb, inset 4px 0 #a3bff2, inset -4px 0 #a3bff2, inset 0 -4px #6d92e2;
}
```
